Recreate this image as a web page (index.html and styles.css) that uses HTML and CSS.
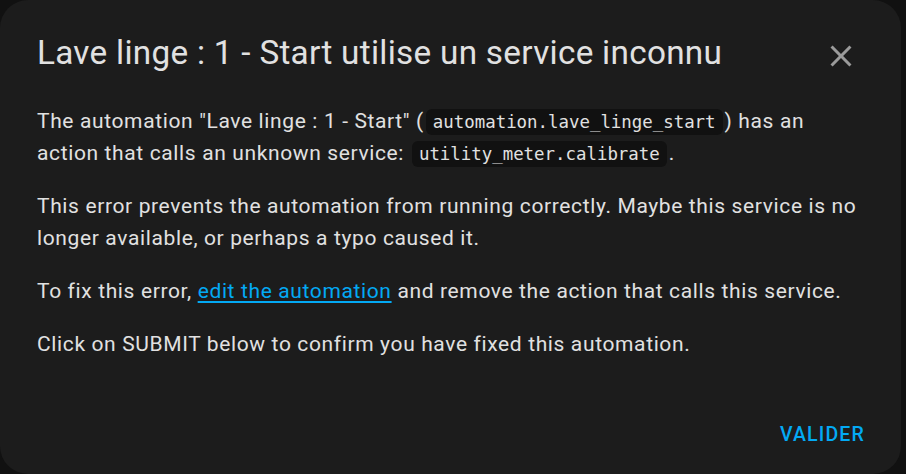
FILE: index.html
```html
<!DOCTYPE html>
<html lang="fr">
<head>
<meta charset="utf-8">
<title>Dialog</title>
<link rel="stylesheet" href="styles.css">
</head>
<body>
<div class="dialog">
  <div class="header">
    <h2 class="title">Lave linge : 1 - Start utilise un service inconnu</h2>
    <button class="close" aria-label="Fermer">
      <svg viewBox="0 0 24 24" width="36" height="36"><path fill="currentColor" d="M19,6.41L17.59,5L12,10.59L6.41,5L5,6.41L10.59,12L5,17.59L6.41,19L12,13.41L17.59,19L19,17.59L13.41,12L19,6.41Z"/></svg>
    </button>
  </div>
  <div class="content">
    <p>The automation "Lave linge : 1 - Start" (<code>automation.lave_linge_start</code>) has an action that calls an unknown service: <code>utility_meter.calibrate</code>.</p>
    <p>This error prevents the automation from running correctly. Maybe this service is no longer available, or perhaps a typo caused it.</p>
    <p>To fix this error, <a href="#">edit the automation</a> and remove the action that calls this service.</p>
    <p>Click on SUBMIT below to confirm you have fixed this automation.</p>
  </div>
  <div class="actions">
    <button class="submit">Valider</button>
  </div>
</div>
</body>
</html>
```
FILE: styles.css
```css
html, body {
  margin: 0;
  padding: 0;
  background: #111111;
  width: 906px;
  height: 474px;
  overflow: hidden;
}
body {
  font-family: Roboto, "Noto Sans", sans-serif;
  color: #e1e1e1;
}
.dialog {
  width: 901px;
  height: 474px;
  box-sizing: border-box;
  background: #1c1c1c;
  border-radius: 28px;
  display: flex;
  flex-direction: column;
  padding: 0 0 0 37px;
}
.header {
  display: flex;
  align-items: flex-start;
  justify-content: space-between;
  padding-top: 31px;
  padding-right: 42px;
}
.title {
  margin: 0;
  font-size: 33.3px;
  font-weight: 400;
  letter-spacing: 0.0085em;
  line-height: 44px;
  color: #e1e1e1;
}
.close {
  background: none;
  border: none;
  padding: 0;
  margin-top: 7px;
  color: #9b9b9b;
  width: 36px;
  height: 36px;
  display: flex;
}
.content {
  font-size: 21px;
  letter-spacing: 0.03em;
  line-height: 32px;
  padding-right: 40px;
  padding-top: 30px;
  flex: 1;
}
.content p {
  margin: 0 0 21px 0;
}
code {
  font-family: "DejaVu Sans Mono", monospace;
  font-size: 17.4px;
  letter-spacing: 0;
  line-height: 1;
  background: #111111;
  border-radius: 6px;
  padding: 3px 7px;
  margin: 0 2px;
  color: #e1e1e1;
}
a {
  color: #03a9f4;
  text-decoration: underline;
  text-underline-offset: 3px;
}
.actions {
  display: flex;
  justify-content: flex-end;
  padding: 0 36px 27px 0;
}
.submit {
  background: none;
  border: none;
  padding: 0;
  font-family: Roboto, sans-serif;
  font-weight: 500;
  font-size: 19.5px;
  letter-spacing: 0.06em;
  text-transform: uppercase;
  color: #03a9f4;
  line-height: 24px;
}
```
